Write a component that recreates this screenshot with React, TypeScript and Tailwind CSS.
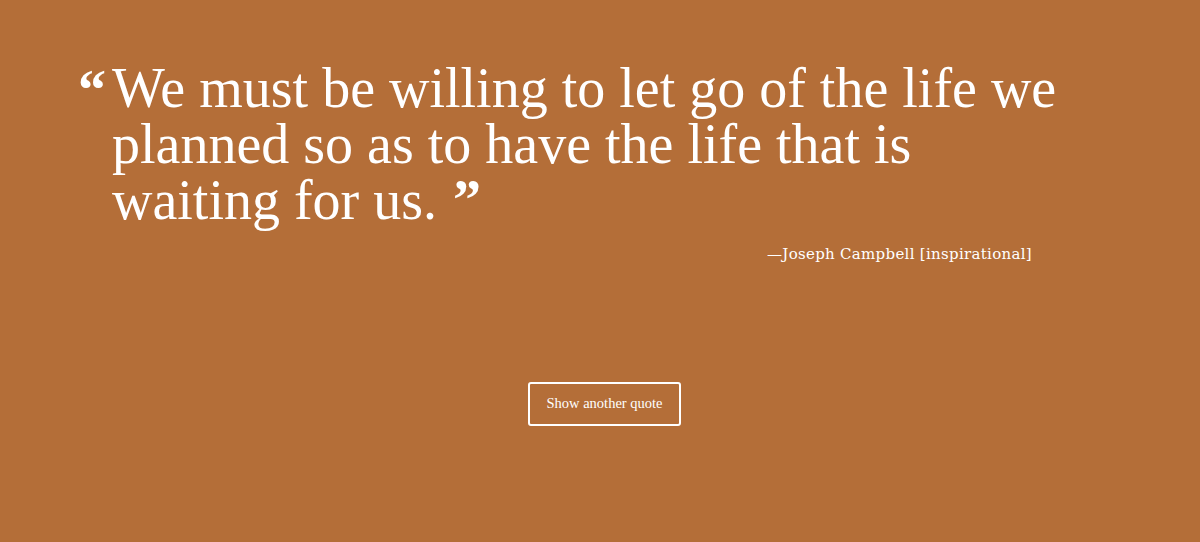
const quote = {
  lines: [
    "We must be willing to let go of the life we",
    "planned so as to have the life that is",
    "waiting for us.",
  ],
  author: "Joseph Campbell",
  tag: "inspirational",
};

export default function App() {
  return (
    <main className="min-h-[542px] w-full bg-[#b46e38] text-white">
      <div className="pl-[78px] pt-[60px]">
        <div className="w-[954px]">
          {/* Quote */}
          <blockquote className="flex font-['Liberation_Serif',serif] text-[56px] leading-[56px]">
            <span className="mt-[2px] w-[34px] shrink-0 font-bold">“</span>
            <p className="whitespace-nowrap">
              {quote.lines.map((line, i) => (
                <span key={i} className="block">
                  {line}
                  {i === quote.lines.length - 1 && (
                    <span className="ml-[16px] font-bold">”</span>
                  )}
                </span>
              ))}
            </p>
          </blockquote>

          {/* Author */}
          <div className="mt-[17px] flex justify-end font-['DejaVu_Serif',serif] text-[15px] leading-[18px] tracking-[0.3px]">
            <span>
              —{quote.author} [{quote.tag}]
            </span>
          </div>
        </div>
      </div>

      <div className="mt-[119px] flex justify-center pl-[9px]">
        <button className="h-[44px] w-[153px] rounded-[3px] border-2 border-white font-['Liberation_Serif',serif] text-[14.5px] text-white">
          Show another quote
        </button>
      </div>
    </main>
  );
}
